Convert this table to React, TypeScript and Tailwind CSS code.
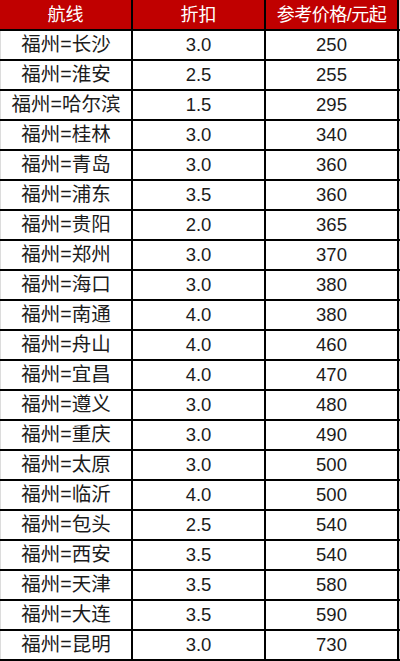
const rows: [string, string, string][] = [
  ['福州=长沙', '3.0', '250'],
  ['福州=淮安', '2.5', '255'],
  ['福州=哈尔滨', '1.5', '295'],
  ['福州=桂林', '3.0', '340'],
  ['福州=青岛', '3.0', '360'],
  ['福州=浦东', '3.5', '360'],
  ['福州=贵阳', '2.0', '365'],
  ['福州=郑州', '3.0', '370'],
  ['福州=海口', '3.0', '380'],
  ['福州=南通', '4.0', '380'],
  ['福州=舟山', '4.0', '460'],
  ['福州=宜昌', '4.0', '470'],
  ['福州=遵义', '3.0', '480'],
  ['福州=重庆', '3.0', '490'],
  ['福州=太原', '3.0', '500'],
  ['福州=临沂', '4.0', '500'],
  ['福州=包头', '2.5', '540'],
  ['福州=西安', '3.5', '540'],
  ['福州=天津', '3.5', '580'],
  ['福州=大连', '3.5', '590'],
  ['福州=昆明', '3.0', '730'],
]

const cell = 'flex w-[133px] items-center justify-center border-r-2 border-black'

export default function App() {
  return (
    <div
      className="h-[661px] w-[400px] overflow-hidden bg-white text-[18.5px] leading-none text-[#1c1c1c]"
      style={{ fontFamily: '"Liberation Sans", "Noto Sans CJK SC", sans-serif' }}
    >
      <div className="flex h-[29px] w-[400px] border-r border-[#dcdcdc] bg-[#c00000] text-[18px] text-white">
        <div className={cell}>航线</div>
        <div className={cell}>折扣</div>
        <div className={`${cell} tracking-[-0.5px]`}>参考价格/元起</div>
      </div>
      {rows.map(([route, discount, price], i) => (
        <div
          key={route}
          className={`flex h-[30px] w-[400px] border-t-2 border-black ${
            i === rows.length - 1 ? 'h-[32px] border-b-2' : ''
          }`}
        >
          <div className={`${cell} border-l border-l-[#dcdcdc] text-[19.5px]`}>{route}</div>
          <div className={cell}>{discount}</div>
          <div className={cell}>{price}</div>
          <div className="w-px bg-[#dcdcdc]" />
        </div>
      ))}
    </div>
  )
}
